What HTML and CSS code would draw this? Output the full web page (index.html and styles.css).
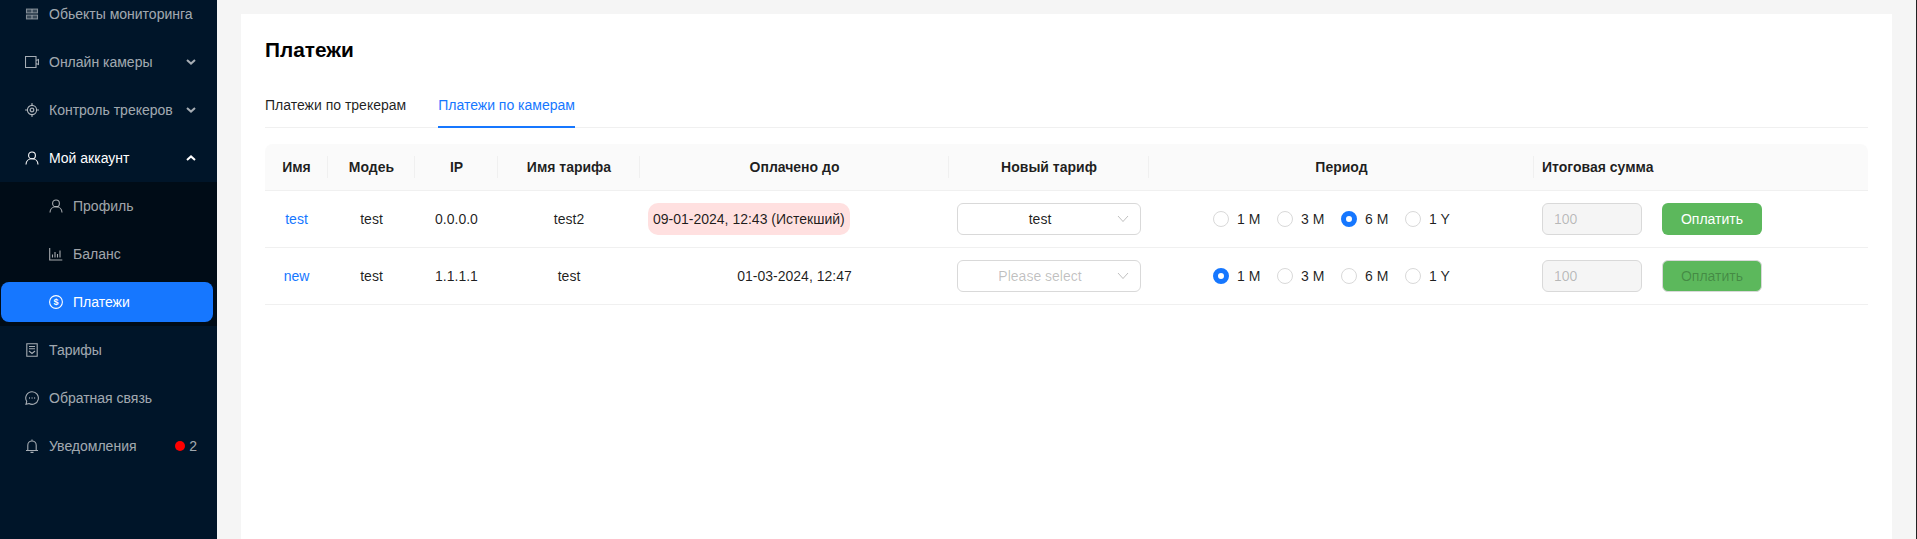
FILE: index.html
```html
<!DOCTYPE html>
<html lang="ru">
<head>
    <meta charset="UTF-8">
    <meta name="viewport" content="width=device-width, initial-scale=1.0">
    <title>Платежи</title>
    <link rel="stylesheet" href="styles.css">
</head>
<body>
    <div class="layout">
        <div class="sidebar">
            <ul class="menu">
                <li class="menu-item">
                    <svg class="icon" viewBox="0 0 14 14"><path class="grid" d="M1.500 2h11v4h-11zM1.500 8h11v4h-11zM7 2v4M7 8v4"/></svg>
                    <span class="menu-label">Обьекты мониторинга</span>
                </li>
                <li class="menu-item">
                    <svg class="icon" viewBox="0 0 14 14"><path d="M.5 1.500h10.500v11H.5zM13.500 4.500v5l-2.500-1V5.500z"/></svg>
                    <span class="menu-label">Онлайн камеры</span>
                    <svg class="chevron" viewBox="0 0 10 6"><path d="M1 1l4 3.600L9 1"/></svg>
                </li>
                <li class="menu-item">
                    <svg class="icon" viewBox="0 0 14 14"><circle cx="7" cy="7" r="4.600"/><circle class="solid" cx="7" cy="7" r="1.800"/><path d="M7 0v2.400M7 11.600V14M0 7h2.400M11.600 7H14"/></svg>
                    <span class="menu-label">Контроль трекеров</span>
                    <svg class="chevron" viewBox="0 0 10 6"><path d="M1 1l4 3.600L9 1"/></svg>
                </li>
                <li class="menu-item open">
                    <svg class="icon" viewBox="0 0 14 14"><circle cx="7" cy="4.400" r="3.400"/><path d="M1 13.500c0-3.400 2.600-5.700 6-5.700s6 2.300 6 5.700"/></svg>
                    <span class="menu-label">Мой аккаунт</span>
                    <svg class="chevron" viewBox="0 0 10 6"><path d="M1 5l4-3.600L9 5"/></svg>
                </li>
                <li>
                    <ul class="submenu">
                        <li class="menu-item sub-item">
                            <svg class="icon" viewBox="0 0 14 14"><circle cx="7" cy="4.400" r="3.400"/><path d="M1 13.500c0-3.400 2.600-5.700 6-5.700s6 2.300 6 5.700"/></svg>
                            <span class="menu-label">Профиль</span>
                        </li>
                        <li class="menu-item sub-item">
                            <svg class="icon" viewBox="0 0 14 14"><path d="M.7 1v12h12.600M3.500 10.500V7.500M6 10.500V5M8.500 10.500V7M11 10.500V3.500"/></svg>
                            <span class="menu-label">Баланс</span>
                        </li>
                        <li class="menu-item sub-item active">
                            <svg class="icon" viewBox="0 0 14 14"><circle cx="7" cy="7" r="6.400"/><text class="dollar" x="7" y="10.200" text-anchor="middle">$</text></svg>
                            <span class="menu-label">Платежи</span>
                        </li>
                    </ul>
                </li>
                <li class="menu-item">
                    <svg class="icon" viewBox="0 0 14 14"><path d="M1.800.7h10.400v12.600H1.800zM4 3.500h6M4 5.800h6M4 8l3 2.500L10 8"/></svg>
                    <span class="menu-label">Тарифы</span>
                </li>
                <li class="menu-item">
                    <svg class="icon" viewBox="0 0 14 14"><path d="M7 .7a6.300 6.300 0 1 1-3 11.800L1 13.300l.7-3A6.300 6.300 0 0 1 7 .7z"/><path class="dots" d="M4 7h.9M6.600 7h.9M9.200 7h.9"/></svg>
                    <span class="menu-label">Обратная связь</span>
                </li>
                <li class="menu-item">
                    <svg class="icon" viewBox="0 0 14 14"><path d="M1 11.500h12M2.800 11.500V6.200a4.200 4.200 0 0 1 8.400 0v5.300M7 .5v1.500M5.500 13.400h3"/></svg>
                    <span class="menu-label">Уведомления</span>
                    <span class="badge-dot"></span>
                    <span class="badge-count">2</span>
                </li>
            </ul>
        </div>

        <div class="main-content">
            <div class="card">
                <h1 class="page-title">Платежи</h1>

                <div class="tabs">
                    <a class="tab" href="#">Платежи по трекерам</a>
                    <a class="tab tab-active" href="#">Платежи по камерам</a>
                </div>

                <table class="pay-table">
                    <thead>
                        <tr>
                            <th>Имя</th>
                            <th>Модеь</th>
                            <th>IP</th>
                            <th>Имя тарифа</th>
                            <th>Оплачено до</th>
                            <th>Новый тариф</th>
                            <th>Период</th>
                            <th class="left">Итоговая сумма</th>
                        </tr>
                    </thead>
                    <tbody>
                        <tr>
                            <td><a href="#">test</a></td>
                            <td>test</td>
                            <td>0.0.0.0</td>
                            <td>test2</td>
                            <td class="left"><span class="expired">09-01-2024, 12:43 (Истекший)</span></td>
                            <td>
                                <div class="select">
                                    <span class="select-value">test</span>
                                    <svg class="select-arrow" viewBox="0 0 12 8"><path d="M1 1l5 5.500L11 1"/></svg>
                                </div>
                            </td>
                            <td>
                                <div class="radio-group">
                                    <label class="radio"><span class="radio-dot"></span>1 M</label>
                                    <label class="radio"><span class="radio-dot"></span>3 M</label>
                                    <label class="radio"><span class="radio-dot checked"></span>6 M</label>
                                    <label class="radio"><span class="radio-dot"></span>1 Y</label>
                                </div>
                            </td>
                            <td class="left">
                                <div class="total">
                                    <span class="total-input">100</span>
                                    <button class="pay-button">Оплатить</button>
                                </div>
                            </td>
                        </tr>
                        <tr>
                            <td><a href="#">new</a></td>
                            <td>test</td>
                            <td>1.1.1.1</td>
                            <td>test</td>
                            <td>01-03-2024, 12:47</td>
                            <td>
                                <div class="select">
                                    <span class="select-value placeholder">Please select</span>
                                    <svg class="select-arrow" viewBox="0 0 12 8"><path d="M1 1l5 5.500L11 1"/></svg>
                                </div>
                            </td>
                            <td>
                                <div class="radio-group">
                                    <label class="radio"><span class="radio-dot checked"></span>1 M</label>
                                    <label class="radio"><span class="radio-dot"></span>3 M</label>
                                    <label class="radio"><span class="radio-dot"></span>6 M</label>
                                    <label class="radio"><span class="radio-dot"></span>1 Y</label>
                                </div>
                            </td>
                            <td class="left">
                                <div class="total">
                                    <span class="total-input">100</span>
                                    <button class="pay-button" disabled>Оплатить</button>
                                </div>
                            </td>
                        </tr>
                    </tbody>
                </table>
            </div>
        </div>
    </div>
</body>
</html>
```

FILE: styles.css
```css
html, body {
    height: 100%;
}

body {
    margin: 0;
    overflow: hidden;
    font-family: "Liberation Sans", Arial, sans-serif;
    font-size: 14px;
    line-height: 22px;
    color: rgba(0, 0, 0, 0.88);
}

.layout {
    display: flex;
    height: 100%;
}

/* sidebar */
.sidebar {
    width: 217px;
    flex-shrink: 0;
    background-color: #001529;
    overflow: hidden;
}

.menu, .submenu {
    display: flex;
    flex-direction: column;
    list-style: none;
    margin: 0;
    padding: 0;
}

.menu {
    margin-top: -10px;
}

.submenu {
    background-color: #000c17;
}

.menu-item {
    display: flex;
    align-items: center;
    height: 40px;
    margin: 4px 4px 4px 1px;
    padding: 0 16px 0 24px;
    border-radius: 8px;
    color: rgba(255, 255, 255, 0.65);
}

.sub-item {
    padding-left: 48px;
}

.menu-item.open {
    color: #fff;
}

.menu-item.active {
    background-color: #1677ff;
    color: #fff;
}

.icon {
    width: 14px;
    height: 14px;
    flex-shrink: 0;
    margin-right: 10px;
    fill: none;
    stroke: currentColor;
    stroke-width: 1.1;
}

.icon .grid {
    fill: currentColor;
    fill-opacity: 0.35;
    stroke-opacity: 0.7;
}

.icon .solid {
    stroke-width: 1.3;
}

.icon .dots {
    stroke-width: 1.4;
}

.icon .dollar {
    font-family: "Liberation Sans", Arial, sans-serif;
    font-size: 9px;
    font-weight: bold;
    fill: currentColor;
    stroke: none;
}

.menu-label {
    flex: 1;
    white-space: nowrap;
}

.chevron {
    width: 10px;
    height: 6px;
    margin-right: 1px;
    fill: none;
    stroke: currentColor;
    stroke-width: 2;
}

.badge-dot {
    width: 10px;
    height: 10px;
    border-radius: 50%;
    background-color: #f00;
    margin-right: 4px;
}

/* main */
.main-content {
    flex: 1;
    min-width: 0;
    background-color: #f5f5f5;
    padding: 14px 24px 0 24px;
    border-right: 1px solid #222;
}

.card {
    height: 100%;
    box-sizing: border-box;
    background-color: #fff;
    padding: 22px 24px 24px;
}

.page-title {
    margin: 0;
    font-size: 20.800px;
    line-height: 28px;
    color: #000;
}

.tabs {
    display: flex;
    gap: 32px;
    margin-top: 18px;
    margin-bottom: 16px;
    border-bottom: 1px solid #f0f0f0;
}

.tab {
    padding: 12px 0 11px;
    margin-bottom: -1px;
    color: rgba(0, 0, 0, 0.88);
    text-decoration: none;
}

.tab-active {
    color: #1677ff;
    border-bottom: 2px solid #1677ff;
    padding-bottom: 10px;
}

.pay-table {
    width: 100%;
    table-layout: fixed;
    border-collapse: separate;
    border-spacing: 0;
}

.pay-table th:nth-child(1) { width: 63px; }
.pay-table th:nth-child(2) { width: 87px; }
.pay-table th:nth-child(3) { width: 83px; }
.pay-table th:nth-child(4) { width: 142px; }
.pay-table th:nth-child(5) { width: 309px; }
.pay-table th:nth-child(6) { width: 200px; }
.pay-table th:nth-child(7) { width: 385px; }

.pay-table th {
    height: 47px;
    padding: 0 8px;
    box-sizing: border-box;
    background: #fafafa linear-gradient(#f0f0f0, #f0f0f0) right center / 1px 22px no-repeat;
    border-bottom: 1px solid #f0f0f0;
    font-weight: bold;
    text-align: center;
}

.pay-table th:first-child {
    border-top-left-radius: 8px;
}

.pay-table th:last-child {
    border-top-right-radius: 8px;
    background-image: none;
}

.pay-table td {
    height: 57px;
    padding: 0 8px;
    box-sizing: border-box;
    border-bottom: 1px solid #f0f0f0;
    text-align: center;
}

.pay-table .left {
    text-align: left;
}

.pay-table a {
    color: #1677ff;
    text-decoration: none;
}

.expired {
    display: inline-block;
    padding: 5px;
    background-color: #ffe0e0;
    border-radius: 10px;
}

.select {
    display: flex;
    align-items: center;
    width: 184px;
    height: 32px;
    box-sizing: border-box;
    border: 1px solid #d9d9d9;
    border-radius: 6px;
    padding: 0 11px;
    background-color: #fff;
}

.select-value {
    flex: 1;
    text-align: center;
}

.placeholder {
    color: rgba(0, 0, 0, 0.25);
}

.select-arrow {
    width: 12px;
    height: 8px;
    margin-left: 6px;
    fill: none;
    stroke: rgba(0, 0, 0, 0.25);
    stroke-width: 1;
}

.radio-group {
    display: flex;
    justify-content: center;
    padding-right: 1px;
}

.radio {
    display: flex;
    align-items: center;
    gap: 8px;
    width: 56px;
    margin-right: 8px;
    white-space: nowrap;
    text-align: left;
}

.radio-dot {
    width: 16px;
    height: 16px;
    box-sizing: border-box;
    flex-shrink: 0;
    border: 1px solid #d9d9d9;
    border-radius: 50%;
    background-color: #fff;
}

.radio-dot.checked {
    border: 5px solid #1677ff;
}

.total {
    display: flex;
    align-items: center;
    gap: 20px;
}

.total-input {
    width: 100px;
    height: 32px;
    box-sizing: border-box;
    border: 1px solid #d9d9d9;
    border-radius: 6px;
    padding: 4px 11px;
    background-color: #f5f5f5;
    color: rgba(0, 0, 0, 0.25);
}

.pay-button {
    width: 100px;
    height: 32px;
    border: none;
    border-radius: 6px;
    background-color: #5cb85c;
    color: #fff;
    font-family: inherit;
    font-size: 14px;
    cursor: pointer;
}

.pay-button:disabled {
    border: 1px solid #d9d9d9;
    color: rgba(0, 0, 0, 0.25);
    cursor: not-allowed;
}
```
